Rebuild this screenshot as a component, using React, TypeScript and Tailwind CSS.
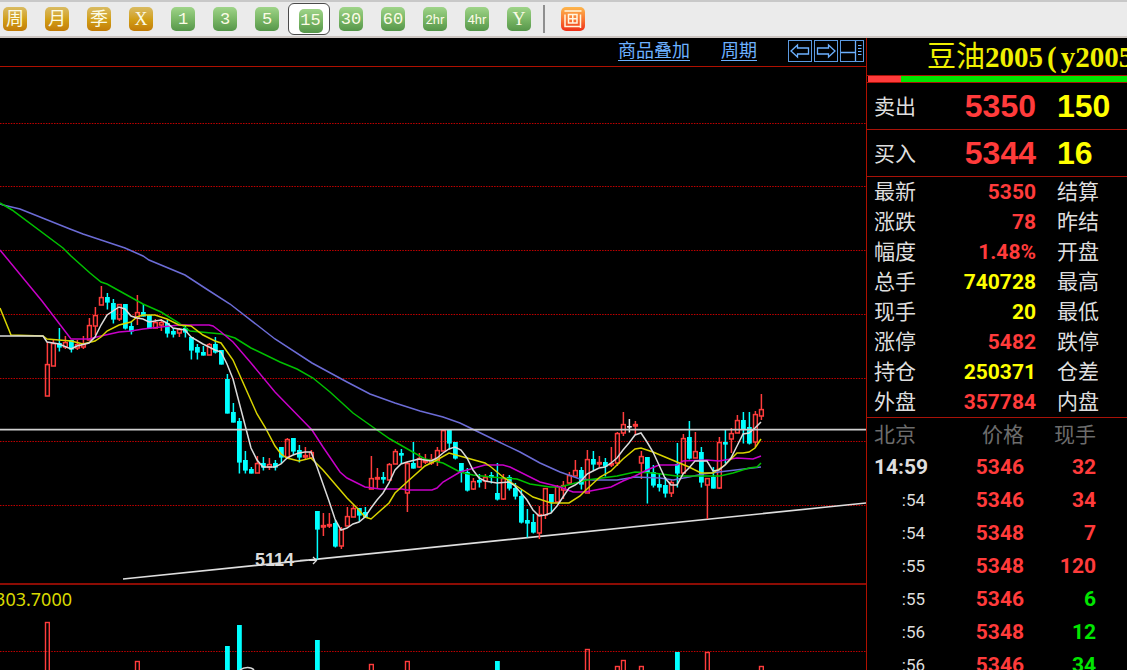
import { clsx } from "clsx";

type Kind = "up" | "down" | "flat";

// high, low, body top, body bottom, kind
type Candle = [number, number, number, number, Kind];

interface Period {
  label: string;
  tone: "gold" | "green";
  font: string;
}

const glyph = {
  cjk: "text-lg",
  mono: "font-['Liberation_Mono',monospace] text-[17px]",
  serif: "font-['Liberation_Serif',serif] text-lg",
  small: "font-['Roboto',sans-serif] text-[13px]",
};

const periods: Period[] = [
  { label: "周", tone: "gold", font: glyph.cjk },
  { label: "月", tone: "gold", font: glyph.cjk },
  { label: "季", tone: "gold", font: glyph.cjk },
  { label: "X", tone: "gold", font: glyph.serif },
  { label: "1", tone: "green", font: glyph.mono },
  { label: "3", tone: "green", font: glyph.mono },
  { label: "5", tone: "green", font: glyph.mono },
  { label: "15", tone: "green", font: glyph.mono },
  { label: "30", tone: "green", font: glyph.mono },
  { label: "60", tone: "green", font: glyph.mono },
  { label: "2hr", tone: "green", font: glyph.small },
  { label: "4hr", tone: "green", font: glyph.small },
  { label: "Y", tone: "green", font: glyph.serif },
];

const quotes = [
  { label: "最新", value: "5350", color: "text-[#ff3b3b]", next: "结算" },
  { label: "涨跌", value: "78", color: "text-[#ff3b3b]", next: "昨结" },
  { label: "幅度", value: "1.48%", color: "text-[#ff3b3b]", next: "开盘" },
  { label: "总手", value: "740728", color: "text-[#ffff00]", next: "最高" },
  { label: "现手", value: "20", color: "text-[#ffff00]", next: "最低" },
  { label: "涨停", value: "5482", color: "text-[#ff3b3b]", next: "跌停" },
  { label: "持仓", value: "250371", color: "text-[#ffff00]", next: "仓差" },
  { label: "外盘", value: "357784", color: "text-[#ff3b3b]", next: "内盘" },
];

const ticks = [
  { time: "14:59", price: 5346, volume: 32, buy: true },
  { time: ":54", price: 5346, volume: 34, buy: true },
  { time: ":54", price: 5348, volume: 7, buy: true },
  { time: ":55", price: 5348, volume: 120, buy: true },
  { time: ":55", price: 5346, volume: 6, buy: false },
  { time: ":56", price: 5348, volume: 12, buy: false },
  { time: ":56", price: 5346, volume: 34, buy: false },
];

const FIRST_X = 47;
const STEP = 6;

const candles: Candle[] = [
  [342, 396, 364, 396, "up"],
  [340, 366, 343, 366, "up"],
  [328, 351, 343, 347, "down"],
  [336, 349, 342, 347, "up"],
  [340, 352, 340, 349, "down"],
  [340, 350, 344, 348, "up"],
  [336, 349, 344, 347, "up"],
  [318, 340, 325, 340, "up"],
  [307, 335, 315, 326, "up"],
  [286, 305, 297, 305, "up"],
  [293, 309, 297, 302, "down"],
  [299, 323, 303, 319, "down"],
  [304, 321, 304, 319, "up"],
  [304, 329, 304, 328, "down"],
  [321, 334, 326, 331, "down"],
  [295, 325, 312, 317, "up"],
  [304, 316, 312, 316, "down"],
  [315, 328, 315, 328, "down"],
  [319, 328, 322, 328, "up"],
  [319, 331, 322, 325, "up"],
  [320, 337, 323, 333, "down"],
  [328, 337, 331, 334, "down"],
  [328, 337, 329, 333, "up"],
  [325, 337, 328, 332, "down"],
  [337, 359, 337, 350, "down"],
  [344, 359, 347, 352, "down"],
  [346, 355, 352, 355, "down"],
  [343, 355, 344, 355, "up"],
  [337, 353, 344, 352, "down"],
  [350, 364, 350, 364, "down"],
  [374, 413, 379, 413, "down"],
  [403, 422, 412, 422, "down"],
  [418, 473, 421, 462, "down"],
  [451, 473, 460, 470, "down"],
  [467, 473, 469, 473, "down"],
  [456, 473, 463, 473, "up"],
  [457, 470, 463, 467, "down"],
  [458, 470, 464, 467, "up"],
  [460, 470, 463, 467, "down"],
  [447, 463, 447, 457, "down"],
  [438, 457, 439, 457, "up"],
  [438, 454, 438, 451, "down"],
  [445, 462, 450, 457, "down"],
  [447, 460, 455, 457, "up"],
  [450, 458, 452, 458, "up"],
  [511, 559, 511, 529, "down"],
  [513, 536, 525, 527, "up"],
  [513, 528, 524, 526, "up"],
  [520, 547, 523, 546, "down"],
  [527, 549, 529, 546, "up"],
  [507, 526, 516, 526, "up"],
  [505, 517, 508, 517, "up"],
  [508, 521, 508, 515, "down"],
  [507, 517, 512, 517, "down"],
  [456, 489, 478, 489, "up"],
  [468, 489, 477, 479, "up"],
  [472, 483, 477, 479, "down"],
  [463, 480, 464, 480, "up"],
  [449, 464, 451, 464, "up"],
  [449, 463, 453, 455, "down"],
  [462, 512, 463, 493, "up"],
  [442, 468, 463, 468, "down"],
  [453, 468, 458, 467, "up"],
  [454, 464, 460, 462, "up"],
  [454, 465, 459, 463, "up"],
  [447, 466, 450, 461, "up"],
  [429, 451, 430, 451, "up"],
  [429, 449, 429, 443, "down"],
  [442, 459, 442, 458, "down"],
  [463, 482, 463, 472, "down"],
  [468, 491, 472, 490, "down"],
  [478, 490, 481, 489, "up"],
  [474, 487, 480, 482, "down"],
  [474, 489, 477, 481, "up"],
  [472, 483, 475, 477, "down"],
  [463, 500, 493, 499, "down"],
  [474, 500, 478, 499, "up"],
  [475, 490, 477, 488, "down"],
  [483, 499, 488, 496, "down"],
  [489, 523, 496, 522, "down"],
  [509, 537, 520, 523, "down"],
  [514, 533, 522, 532, "down"],
  [506, 539, 514, 533, "up"],
  [488, 519, 488, 515, "up"],
  [494, 512, 494, 502, "down"],
  [485, 502, 486, 502, "up"],
  [481, 499, 485, 490, "up"],
  [472, 484, 475, 483, "up"],
  [460, 476, 470, 476, "up"],
  [467, 489, 470, 484, "down"],
  [450, 493, 459, 493, "up"],
  [451, 470, 459, 464, "down"],
  [456, 467, 462, 464, "up"],
  [458, 476, 462, 466, "down"],
  [447, 467, 463, 465, "up"],
  [432, 466, 433, 463, "up"],
  [412, 436, 424, 433, "up"],
  [419, 432, 426, 427, "flat"],
  [421, 435, 424, 426, "up"],
  [451, 479, 456, 463, "up"],
  [457, 503, 457, 472, "down"],
  [465, 487, 472, 485, "down"],
  [473, 491, 484, 487, "down"],
  [477, 497, 485, 493, "down"],
  [479, 497, 482, 493, "up"],
  [443, 487, 464, 473, "down"],
  [434, 474, 438, 473, "up"],
  [421, 459, 437, 458, "down"],
  [432, 458, 451, 458, "up"],
  [447, 487, 452, 482, "down"],
  [478, 519, 478, 485, "up"],
  [467, 488, 477, 488, "down"],
  [437, 489, 442, 488, "up"],
  [429, 463, 442, 444, "down"],
  [428, 453, 433, 439, "up"],
  [415, 433, 420, 433, "up"],
  [412, 443, 420, 429, "down"],
  [412, 444, 427, 443, "down"],
  [411, 447, 414, 442, "up"],
  [394, 420, 409, 416, "up"],
];

const averages = [
  {
    color: "#6c6cd6",
    points:
      "0,204 3,205 20,209 45,219 70,229 83,234 107,242 125,248 143,256 149,260 185,275 208,290 230,304 275,339 312,363 347,382 370,394 395,403 420,411 443,417 460,423 497,441 520,452 540,463 560,472 580,479 593,480 617,480 635,477 660,478 673,480 689,477 703,474 727,471 761,467",
  },
  {
    color: "#00c000",
    points:
      "0,203 12,210 63,248 71,256 90,273 101,282 107,284 125,294 143,304 161,312 179,323 190,331 222,334 235,338 251,348 280,362 297,369 313,378 330,392 353,413 377,430 390,439 425,459 443,463 460,472 473,475 491,477 517,479 530,484 550,487 560,487 587,480 617,476 635,472 653,473 677,476 720,476 733,473 749,468 757,467 761,463",
  },
  {
    color: "#c800c8",
    points:
      "0,250 42,301 71,339 89,339 101,336 119,332 131,331 143,329 161,327 179,325 209,325 213,326 221,332 233,342 251,363 275,392 312,430 323,447 340,472 347,478 365,487 380,489 402,489 407,490 432,490 437,488 443,482 460,472 485,465 503,465 510,467 540,482 560,487 573,492 585,492 611,487 623,481 635,476 647,470 659,465 677,465 683,461 707,460 719,461 737,458 753,459 761,456",
  },
  {
    color: "#d8d400",
    points:
      "0,308 11,335 43,336 47,339 71,341 83,344 95,341 101,337 107,331 119,325 131,322 137,317 143,315 155,315 167,319 179,325 191,326 203,335 215,341 221,343 233,360 245,387 257,414 265,427 275,446 281,454 287,458 299,461 311,458 323,470 335,484 347,498 359,510 365,517 371,519 389,503 395,493 407,482 425,466 435,461 449,453 467,458 485,463 491,467 503,477 521,489 533,497 551,503 569,503 580,496 587,489 600,477 611,471 623,459 635,449 641,448 653,452 665,457 677,462 689,467 701,473 713,473 725,465 737,453 743,453 749,452 755,448 761,439",
  },
  {
    color: "#dadada",
    points:
      "0,336 43,336 47,342 59,344 71,349 77,346 89,343 95,337 101,325 107,315 113,311 119,307 125,309 131,316 137,318 143,319 149,322 161,320 167,323 173,328 185,330 191,337 203,344 215,350 221,352 227,364 233,379 239,402 245,425 251,448 257,460 263,467 275,467 281,464 287,458 293,455 299,453 305,452 311,452 317,467 323,484 329,501 335,519 341,530 347,528 353,524 359,522 365,517 371,508 377,500 383,493 389,483 395,470 401,464 407,462 419,459 431,461 437,458 443,453 449,449 455,447 461,450 467,458 473,470 479,478 485,481 497,483 509,482 515,486 521,493 527,500 533,510 539,516 545,515 551,513 557,506 563,497 569,488 575,485 581,481 587,474 593,471 599,468 605,467 611,463 617,458 623,450 629,443 635,435 641,433 647,442 653,452 659,465 665,478 671,485 677,485 683,474 689,468 695,461 707,461 713,471 719,470 725,465 731,458 737,446 743,434 749,433 755,428 761,422",
  },
];

const volumes: { x: number; top: number; kind: Kind }[] = [
  { x: 47, top: 622, kind: "up" },
  { x: 137, top: 661, kind: "up" },
  { x: 227, top: 646, kind: "down" },
  { x: 239, top: 625, kind: "down" },
  { x: 317, top: 640, kind: "down" },
  { x: 371, top: 664, kind: "up" },
  { x: 407, top: 661, kind: "up" },
  { x: 497, top: 661, kind: "down" },
  { x: 587, top: 649, kind: "up" },
  { x: 617, top: 666, kind: "up" },
  { x: 623, top: 660, kind: "up" },
  { x: 641, top: 666, kind: "up" },
  { x: 677, top: 652, kind: "down" },
  { x: 707, top: 652, kind: "up" },
  { x: 761, top: 666, kind: "up" },
];

const gridLines = [123, 186, 250, 314, 378, 441, 505];

const strokes: Record<Kind, string> = { up: "#ff3c3c", down: "#00ffff", flat: "#e6e6e6" };

function GridLine({ y }: { y: number }) {
  return <line x1="0" x2="866" y1={y + 0.5} y2={y + 0.5} stroke="#c00000" strokeWidth="1.2" strokeDasharray="1.5 1.2" />;
}

function CandleShape({ x, candle }: { x: number; candle: Candle }) {
  const [high, low, top, bottom, kind] = candle;
  const color = strokes[kind];
  const cx = x + 0.4;

  if (kind === "up") {
    return (
      <g stroke={color} strokeWidth="1.5" fill="none">
        <path d={`M${cx} ${high}V${top}M${cx} ${bottom}V${low}`} />
        <rect x={cx - 1.9} y={top + 0.6} width="3.8" height={Math.max(bottom - top - 0.6, 1)} />
      </g>
    );
  }
  return (
    <g>
      <path d={`M${cx} ${high}V${low + 0.5}`} stroke={color} strokeWidth="1.5" />
      <rect x={cx - 2.4} y={top} width="4.8" height={bottom - top + 0.6} fill={color} />
    </g>
  );
}

function PriceChart() {
  return (
    <svg viewBox="0 67 866 516" className="block w-full" role="img" aria-label="K线图">
      {gridLines.map((y) => (
        <GridLine key={y} y={y} />
      ))}
      <path d="M123 579L866 503" stroke="#dedede" strokeWidth="1.6" />
      {candles.map((candle, i) => (
        <CandleShape key={i} x={FIRST_X + i * STEP} candle={candle} />
      ))}
      {averages.map((line) => (
        <polyline key={line.color} points={line.points} fill="none" stroke={line.color} strokeWidth="1.5" />
      ))}
      <path d="M0 429.6H866" stroke="#d0d0d0" strokeWidth="1.8" />
      <text x="255" y="566" fill="#dcdcdc" className="text-lg font-bold">
        5114
      </text>
      <path d="M300 560.4H307M309 560.4H316M313 557L316.5 560.4L313 564" fill="none" stroke="#dcdcdc" strokeWidth="1.3" />
    </svg>
  );
}

function VolumeChart() {
  return (
    <svg viewBox="0 609 866 61" className="block w-full" role="img" aria-label="成交量">
      <GridLine y={651} />
      {volumes.map(({ x, top, kind }) =>
        kind === "up" ? (
          <rect key={x} x={x - 1.5} y={top + 0.5} width="3.8" height="80" fill="none" stroke="#ff3c3c" strokeWidth="1.4" />
        ) : (
          <rect key={x} x={x - 2} y={top} width="4.8" height="80" fill="#00ffff" />
        )
      )}
      <path d="M240 670Q243 667.5 247.5 667.5T254 670" fill="none" stroke="#d8d8d8" strokeWidth="1.5" />
    </svg>
  );
}

function Toolbar() {
  return (
    <header className="flex h-[38px] shrink-0 items-center overflow-hidden border-t-2 border-b-2 border-t-[#c8c8c8] border-b-[#cdc6c2] bg-[#ebebeb]">
      <nav className="-ml-1.5 flex items-center" aria-label="周期">
        {periods.map(({ label, tone, font }) => {
          const active = label === "15";
          return (
            <button
              key={label}
              type="button"
              aria-pressed={active}
              className={clsx(
                "flex h-8 w-[42px] shrink-0 items-center justify-center",
                active && "rounded-md border-[1px] border-[#4b4b4b] bg-white pt-[3px] pl-[3px]"
              )}
            >
              <span
                className={clsx(
                  "flex size-6 items-center justify-center rounded-[5px] leading-none text-[#fbfbe6]",
                  font,
                  tone === "gold"
                    ? "bg-linear-to-b from-[#d9bb60] via-[#d2a017] to-[#c27c08]"
                    : "bg-linear-to-b from-[#9fd489] via-[#7ab766] to-[#56964a]"
                )}
              >
                {label}
              </span>
            </button>
          );
        })}
        <span className="mr-[7px] ml-[3px] h-7 w-0.5 bg-[#8f8f8f]" />
        <button type="button" aria-label="画线" className="flex h-8 w-[42px] items-center justify-center">
          <svg viewBox="0 0 24 24" className="size-6" fill="none">
            <defs>
              <linearGradient id="draw" x1="0" y1="0" x2="0" y2="1">
                <stop offset="0" stopColor="#fdb64c" />
                <stop offset="0.5" stopColor="#fa7a34" />
                <stop offset="1" stopColor="#ee3018" />
              </linearGradient>
            </defs>
            <rect width="24" height="24" rx="5" fill="url(#draw)" />
            <path
              d="M3.5 4H20.5M4 7.500V19.500H20M19.500 7.500V21M7.500 7.500H16V16H7.500ZM11.750 8V16M7.500 11.750H16"
              stroke="#fff6e0"
              strokeWidth="1.5"
            />
          </svg>
        </button>
      </nav>
    </header>
  );
}

function ChartHeader() {
  const frame = "flex h-[22px] w-6 items-center justify-center border border-[#5c9ae0] text-[#6db1ff]";
  return (
    <div className="flex h-[29px] items-center justify-end gap-[31px] border-b border-[#b01000] pr-0.5 pb-0.5 text-lg leading-none text-[#6db1ff]">
      <a href="#overlay" className="border-b border-[#6db1ff]">
        商品叠加
      </a>
      <a href="#period" className="border-b border-[#6db1ff]">
        周期
      </a>
      <div className="flex gap-0.5">
        <button type="button" aria-label="上一个" className={frame}>
          <svg viewBox="0 0 22 20" className="h-5 w-[22px] shrink-0" fill="none" stroke="currentColor" strokeWidth="1.3">
            <path d="M2 10L8.500 4V7H19.500V13H8.500V16Z" />
          </svg>
        </button>
        <button type="button" aria-label="下一个" className={frame}>
          <svg viewBox="0 0 22 20" className="h-5 w-[22px] shrink-0" fill="none" stroke="currentColor" strokeWidth="1.3">
            <path d="M20 10L13.500 4V7H2.500V13H13.500V16Z" />
          </svg>
        </button>
        <button type="button" aria-label="布局" className={frame}>
          <svg viewBox="0 0 22 20" className="h-5 w-[22px] shrink-0" fill="none" stroke="currentColor" strokeWidth="1.3">
            <path d="M0 11.500H14.500M14.500 0V20" />
            <path d="M17 4.500H20.500M17 7.500H20.500M17 10.500H20.500M17 13.500H20.500" strokeWidth="1.2" />
          </svg>
        </button>
      </div>
    </div>
  );
}

function BigQuote({ label, price, amount }: { label: string; price: string; amount: string }) {
  return (
    <div className="grid h-[47px] shrink-0 grid-cols-[42px_120px_1fr] items-center border-b border-[#a81208] pl-[7px] text-[21px] leading-none">
      <span>{label}</span>
      <span className="text-right text-[32px] font-bold text-[#ff3b3b]">{price}</span>
      <span className="pl-[21px] text-[32px] font-bold text-[#ffff00]">{amount}</span>
    </div>
  );
}

function QuotePanel() {
  return (
    <aside className="flex w-[261px] shrink-0 flex-col overflow-hidden border-l border-[#b01000] text-[#dedede]">
      <h1 className="h-[37px] shrink-0 pl-[60px] font-['Liberation_Serif','Noto_Sans_CJK_SC',serif] text-[29px] leading-[39px] whitespace-nowrap text-[#f0f000]">
        豆油
        <span className="font-bold">
          2005<span className="px-1">(</span>y2005)
        </span>
      </h1>
      <div className="flex h-2 shrink-0 border-y border-[#a81208] pl-px">
        <div className="w-[33px] bg-[#ff3b3b]" />
        <div className="flex-1 bg-[#00e600]" />
      </div>
      <BigQuote label="卖出" price="5350" amount="150" />
      <BigQuote label="买入" price="5344" amount="16" />

      <dl className="shrink-0 border-b border-[#a81208] pl-[7px] text-[21px] leading-[30px]">
        {quotes.map(({ label, value, color, next }) => (
          <div key={label} className="grid grid-cols-[42px_120px_1fr]">
            <dt>{label}</dt>
            <dd className={clsx("text-right font-['Roboto'] font-bold", color)}>{value}</dd>
            <dt className="pl-[21px]">{next}</dt>
          </div>
        ))}
      </dl>

      <table className="ml-[7px] w-[222px] table-fixed text-right text-[21px] leading-[33px]">
        <thead className="text-[#6c6c6c]">
          <tr>
            <th className="w-[54px] text-left font-normal">北京</th>
            <th className="w-24 font-normal">价格</th>
            <th className="w-[72px] font-normal">现手</th>
          </tr>
        </thead>
        <tbody className="font-['Roboto'] font-bold">
          {ticks.map(({ time, price, volume, buy }, i) => (
            <tr key={i}>
              {i === 0 ? (
                <td className="text-left">{time}</td>
              ) : (
                <td className="pr-[3px] text-[17px] leading-[33px] font-normal">{time}</td>
              )}
              <td className="text-[#ff3b3b]">{price}</td>
              <td className={buy ? "text-[#ff3b3b]" : "text-[#00e600]"}>{volume}</td>
            </tr>
          ))}
        </tbody>
      </table>
    </aside>
  );
}

export default function App() {
  return (
    <div className="flex h-screen flex-col overflow-hidden bg-black font-['Liberation_Sans','Noto_Sans_CJK_SC',sans-serif]">
      <Toolbar />
      <div className="flex min-h-0 flex-1">
        <main className="min-w-0 flex-1 overflow-hidden">
          <ChartHeader />
          <PriceChart />
          <section className="border-t-2 border-[#8c0c04]">
            <div className="flex h-6 w-[72px] items-center justify-end overflow-hidden pt-1 font-['Noto_Sans'] text-lg leading-none text-[#d8d800]">
              303.7000
            </div>
            <VolumeChart />
          </section>
        </main>
        <QuotePanel />
      </div>
    </div>
  );
}
